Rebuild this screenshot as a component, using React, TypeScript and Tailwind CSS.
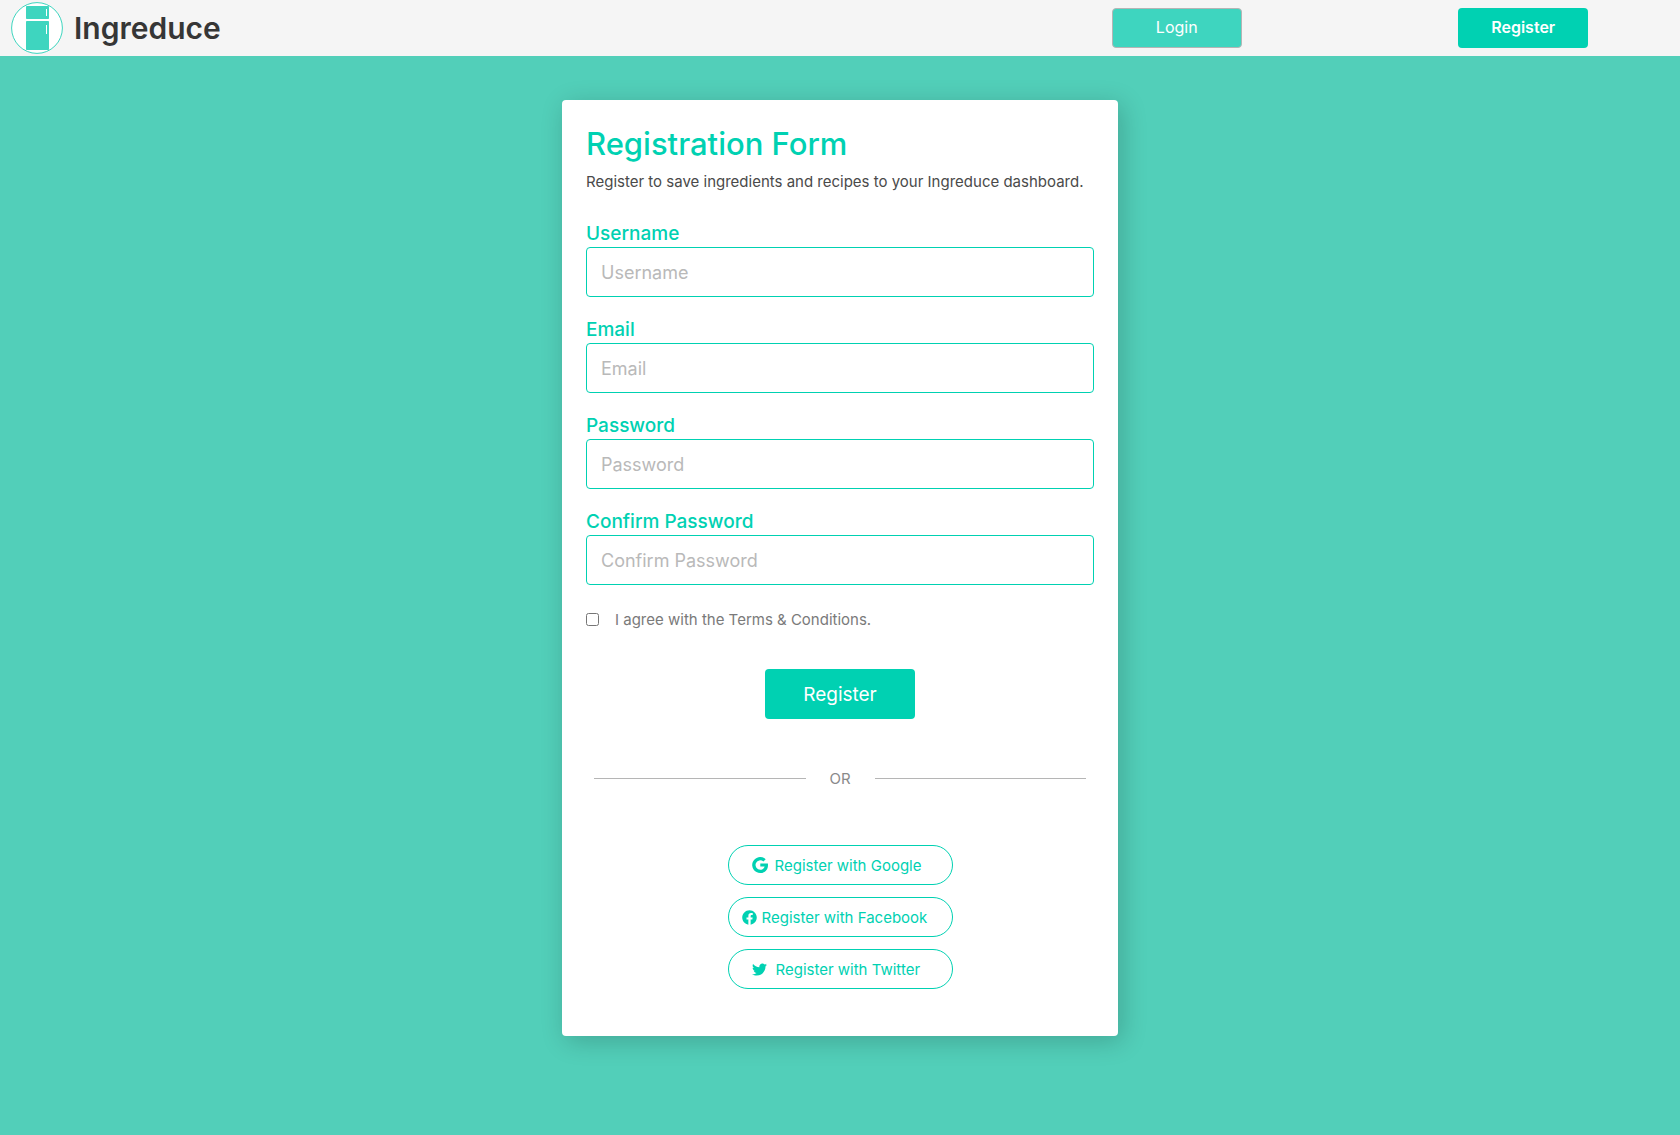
import type { ReactNode } from "react";
import { FaFacebook, FaTwitter } from "react-icons/fa";

function FridgeLogo() {
  return (
    <svg width="52" height="52" viewBox="0 0 52 52" aria-hidden="true">
      <circle cx="26" cy="26" r="25.4" fill="#fff" stroke="#3ed5bf" strokeWidth="1" />
      <rect x="15" y="4" width="23" height="13" rx="0.8" fill="#3ed5bf" />
      <rect x="15" y="19" width="23" height="29" rx="0.8" fill="#3ed5bf" />
      <path d="M35.5 7v7M35.5 23v9" stroke="#fff" strokeWidth="1" />
    </svg>
  );
}

function GoogleIcon() {
  return (
    <svg width="16" height="16" viewBox="0 0 16 16" aria-hidden="true">
      <path
        fill="currentColor"
        d="M15.9 6.6H8.3v3h4.3c-.5 1.9-2 3.1-4.3 3.1a4.7 4.7 0 1 1 3.1-8.2l2.3-2.3A8 8 0 1 0 8.2 16c4.5 0 7.8-3 7.8-7.7 0-.6 0-1.2-.1-1.7z"
      />
    </svg>
  );
}

const fields = [
  { id: "username", label: "Username", type: "text" },
  { id: "email", label: "Email", type: "email" },
  { id: "password", label: "Password", type: "password" },
  { id: "confirm", label: "Confirm Password", type: "password" },
];

function Field({ id, label, type }: { id: string; label: string; type: string }) {
  return (
    <div className="mb-4 flex flex-col">
      <label htmlFor={id} className="pt-1 text-[19px] leading-[26px] font-medium text-[#00d1b2]">
        {label}
      </label>
      <input
        id={id}
        type={type}
        placeholder={label}
        className="h-[50px] w-full rounded border border-[#00d1b2] px-3.5 text-lg text-[#363636] placeholder:text-[#b9b9b9]"
      />
    </div>
  );
}

function SocialButton({ icon, children, className }: { icon: ReactNode; children: ReactNode; className: string }) {
  return (
    <button
      type="button"
      className={`flex h-10 w-[225px] items-center rounded-full border border-[#00d1b2] text-[15px] text-[#00d1b2] ${className}`}
    >
      {icon}
      <span className="pt-0.5 whitespace-nowrap">{children}</span>
    </button>
  );
}

export default function App() {
  return (
    <div className="flex min-h-screen flex-col bg-[#52cfb9] font-[Inter,sans-serif] text-[#4a4a4a]">
      <header className="flex h-14 items-center bg-[#f5f5f5] pl-[11px]">
        <a href="#" className="flex items-center gap-[11px] text-[30px] font-semibold text-[#363636]">
          <FridgeLogo />
          Ingreduce
        </a>
        <nav className="mr-[5.5%] ml-auto flex w-[28.55%] justify-between">
          <button type="button" className="h-10 w-[130px] rounded border border-[#b5b5b5] bg-[#3ed5bf] pb-0.5 text-base text-white">
            Login
          </button>
          <button type="button" className="h-10 w-[130px] rounded bg-[#00d1b2] pb-0.5 text-base font-semibold text-white">
            Register
          </button>
        </nav>
      </header>

      <main className="flex justify-center pt-11 pb-24">
        <form className="w-[556px] rounded bg-white px-6 pt-6 pb-[47px] shadow-[4px_5px_26px_rgba(10,10,10,0.2)]">
          <h1 className="text-[31px] leading-10 font-medium text-[#00d1b2]">Registration Form</h1>
          <p className="mt-1.5 text-[15px] leading-6 whitespace-nowrap">
            Register to save ingredients and recipes to your Ingreduce dashboard.
          </p>

          <div className="mt-[23px]">
            {fields.map((field) => (
              <Field key={field.id} {...field} />
            ))}
          </div>

          <label className="mt-[22px] flex h-6 items-center gap-4 text-[15px] text-[#7a7a7a]">
            <input type="checkbox" className="size-[13px]" />
            <span className="pt-0.5">I agree with the Terms &amp; Conditions.</span>
          </label>

          <div className="mt-[38px] flex justify-center">
            <button type="submit" className="h-[50px] w-[150px] rounded bg-[#00d1b2] pt-0.5 text-[19px] text-white">
              Register
            </button>
          </div>

          <div className="mt-[47px] flex h-6 items-center px-2 text-[15px] text-[#8a8a8a]">
            <hr className="flex-1 border-[#b5b5b5]" />
            <span className="w-[69px] pt-0.5 text-center">OR</span>
            <hr className="flex-1 border-[#b5b5b5]" />
          </div>

          <div className="mt-[55px] flex flex-col items-center gap-3">
            <SocialButton icon={<GoogleIcon />} className="gap-[7px] pl-[23px]">
              Register with Google
            </SocialButton>
            <SocialButton icon={<FaFacebook size={15} />} className="gap-[5px] pl-[13px]">
              Register with Facebook
            </SocialButton>
            <SocialButton icon={<FaTwitter size={15} />} className="gap-[9px] pl-[23px]">
              Register with Twitter
            </SocialButton>
          </div>
        </form>
      </main>
    </div>
  );
}
